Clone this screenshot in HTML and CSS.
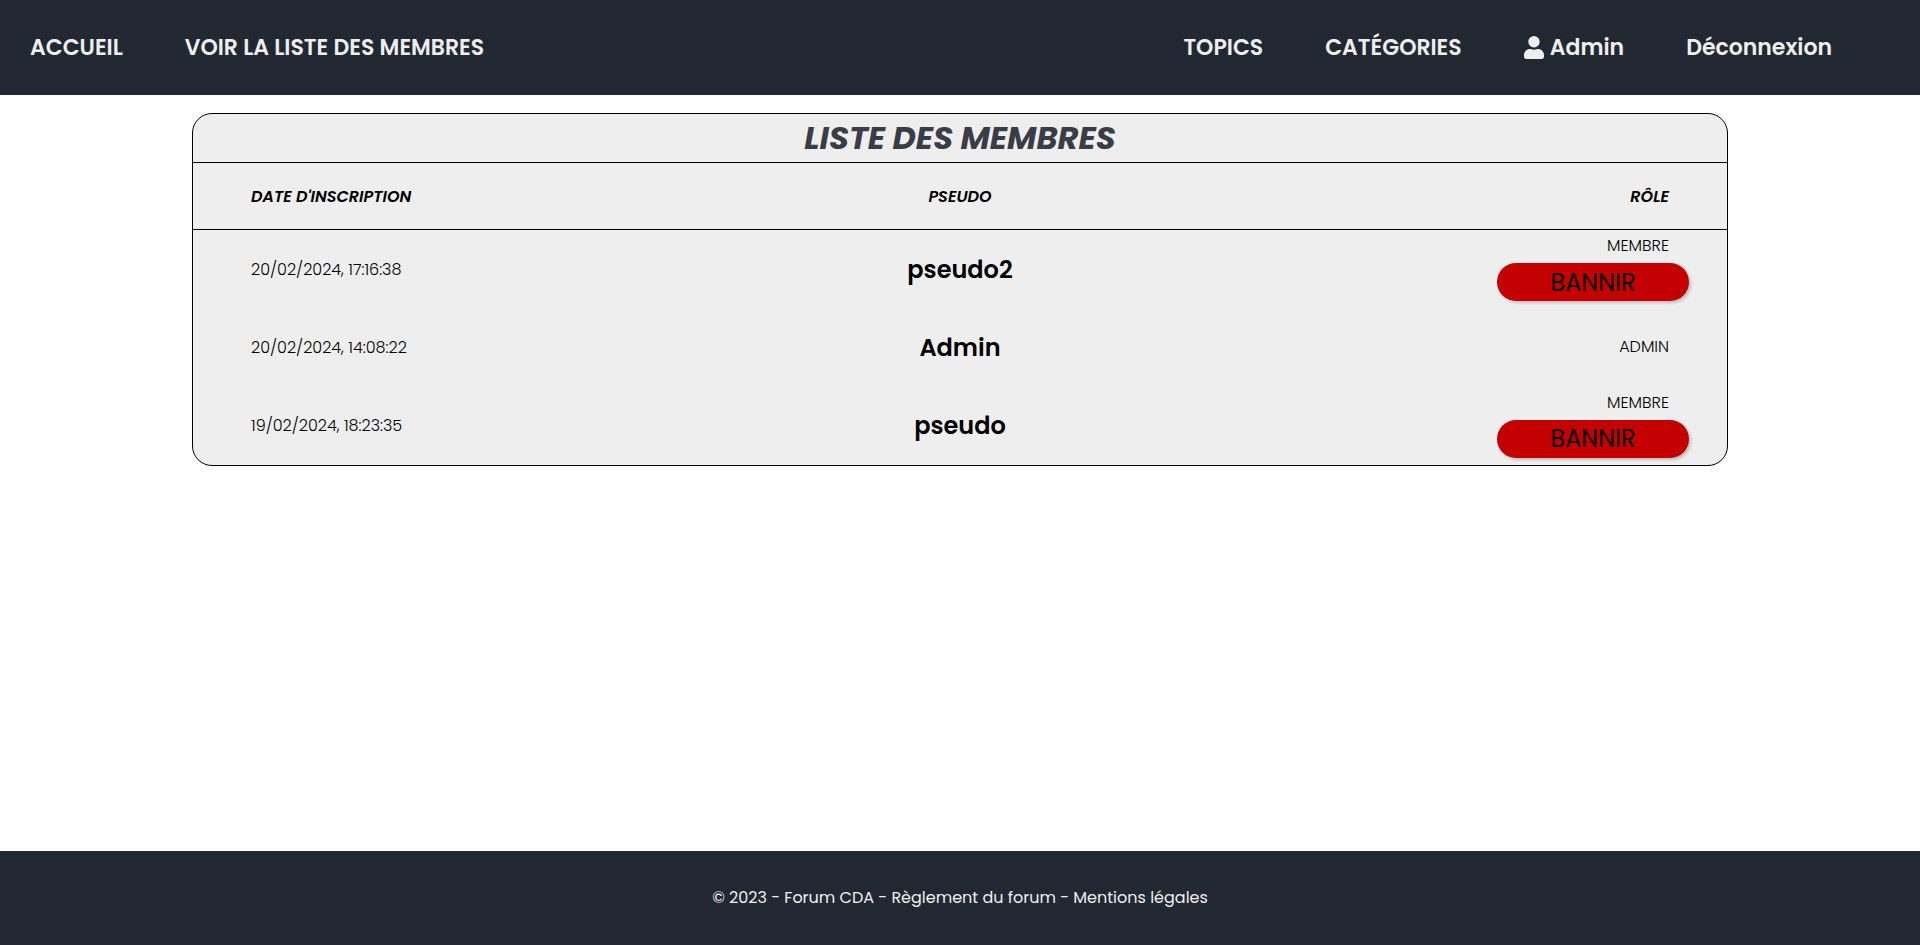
FILE: index.html
```html
<!DOCTYPE html>
<html lang="fr">
<head>
<meta charset="utf-8">
<meta name="viewport" content="width=device-width, initial-scale=1">
<title>Liste des membres</title>
<link rel="stylesheet" href="styles.css">
</head>
<body>
<header class="site-header">
  <nav class="nav">
    <a class="nav-link" href="#">ACCUEIL</a>
    <a class="nav-link" href="#">VOIR LA LISTE DES MEMBRES</a>
  </nav>
  <nav class="nav">
    <a class="nav-link" href="#">TOPICS</a>
    <a class="nav-link" href="#">CATÉGORIES</a>
    <a class="nav-link nav-user" href="#"><svg class="user-icon" viewBox="0 0 448 512" aria-hidden="true"><path fill="currentColor" d="M224 256A128 128 0 1 0 224 0a128 128 0 0 0 0 256zm89.600 32h-16.700c-22.200 10.200-46.900 16-72.900 16s-50.600-5.800-72.900-16h-16.700C60.200 288 0 348.200 0 422.400V464c0 26.500 21.500 48 48 48h352c26.500 0 48-21.500 48-48v-41.600C448 348.200 387.800 288 313.600 288z"/></svg>Admin</a>
    <a class="nav-link" href="#">Déconnexion</a>
  </nav>
</header>
<main class="content">
  <section class="panel">
    <h1 class="panel-title">LISTE DES MEMBRES</h1>
    <table class="members">
      <thead>
        <tr><th class="col-date">DATE D'INSCRIPTION</th><th class="col-name">PSEUDO</th><th class="col-role">RÔLE</th></tr>
      </thead>
      <tbody>
        <tr>
          <td class="col-date">20/02/2024, 17:16:38</td>
          <td class="col-name">pseudo2</td>
          <td class="col-role"><span class="role">MEMBRE</span><button class="ban" type="button">BANNIR</button></td>
        </tr>
        <tr>
          <td class="col-date">20/02/2024, 14:08:22</td>
          <td class="col-name">Admin</td>
          <td class="col-role"><span class="role">ADMIN</span></td>
        </tr>
        <tr>
          <td class="col-date">19/02/2024, 18:23:35</td>
          <td class="col-name">pseudo</td>
          <td class="col-role"><span class="role">MEMBRE</span><button class="ban" type="button">BANNIR</button></td>
        </tr>
      </tbody>
    </table>
  </section>
</main>
<footer class="site-footer">
  <p class="footer-text">© 2023 - Forum CDA - <a class="footer-link" href="#">Règlement du forum</a> - <a class="footer-link" href="#">Mentions légales</a></p>
</footer>
</body>
</html>
```
FILE: styles.css
```css
* { box-sizing: border-box; }
body {
  margin: 0;
  min-height: 100vh;
  display: flex;
  flex-direction: column;
  background: #fff;
  color: #000;
  font-family: Poppins, Inter, "Open Sans", sans-serif;
  font-size: 16px;
}
.site-header {
  display: flex;
  align-items: center;
  justify-content: space-between;
  min-height: 95px;
  padding: 0 88px 0 30px;
  background: #222831;
}
.nav { display: flex; align-items: center; gap: 62px; }
.nav-link {
  color: #eee;
  font-size: 22px;
  font-weight: 600;
  line-height: 32px;
  text-decoration: none;
}
.nav-user { display: flex; align-items: center; gap: 6px; }
.user-icon { width: 20px; height: 23px; }
.content { flex: 1; padding: 18px 10%; }
.panel {
  border: 1px solid #000;
  border-radius: 20px;
  background: #eee;
}
.panel-title {
  margin: 0;
  border-bottom: 1px solid #000;
  color: #393e46;
  font-size: 32px;
  font-style: italic;
  font-weight: 700;
  line-height: 48px;
  text-align: center;
}
.members { width: 100%; border-collapse: separate; border-spacing: 0; table-layout: fixed; }
.members th {
  height: 67px;
  padding: 0;
  border-bottom: 1px solid #000;
  font-size: 16px;
  font-style: italic;
  font-weight: 600;
}
.members td { height: 78px; padding: 0; font-size: 16px; font-weight: 300; }
.members tr:last-child td { height: 79px; }
.members .col-date { padding-left: 58px; text-align: left; }
.members .col-name { text-align: center; }
.members td.col-name { font-size: 24px; font-weight: 600; }
.members .col-role { text-align: right; }
.members th.col-role { padding-right: 58px; }
.members td.col-role { padding-right: 38px; }
.role { display: block; padding-right: 20px; line-height: 30px; }
.ban {
  width: 192px;
  height: 38px;
  margin: 2px 0 6px;
  padding: 0;
  display: inline-block;
  vertical-align: top;
  border: 0;
  border-radius: 20px;
  background: #c40000;
  box-shadow: 2px 2px 3px rgba(0, 0, 0, 0.2);
  color: #000;
  font-family: inherit;
  font-size: 24px;
  font-weight: 400;
}
.site-footer {
  display: flex;
  align-items: center;
  justify-content: center;
  min-height: 94px;
  background: #222831;
  color: #eee;
}
.footer-text { margin: 0; line-height: 24px; }
.footer-link { color: inherit; text-decoration: none; }
```
